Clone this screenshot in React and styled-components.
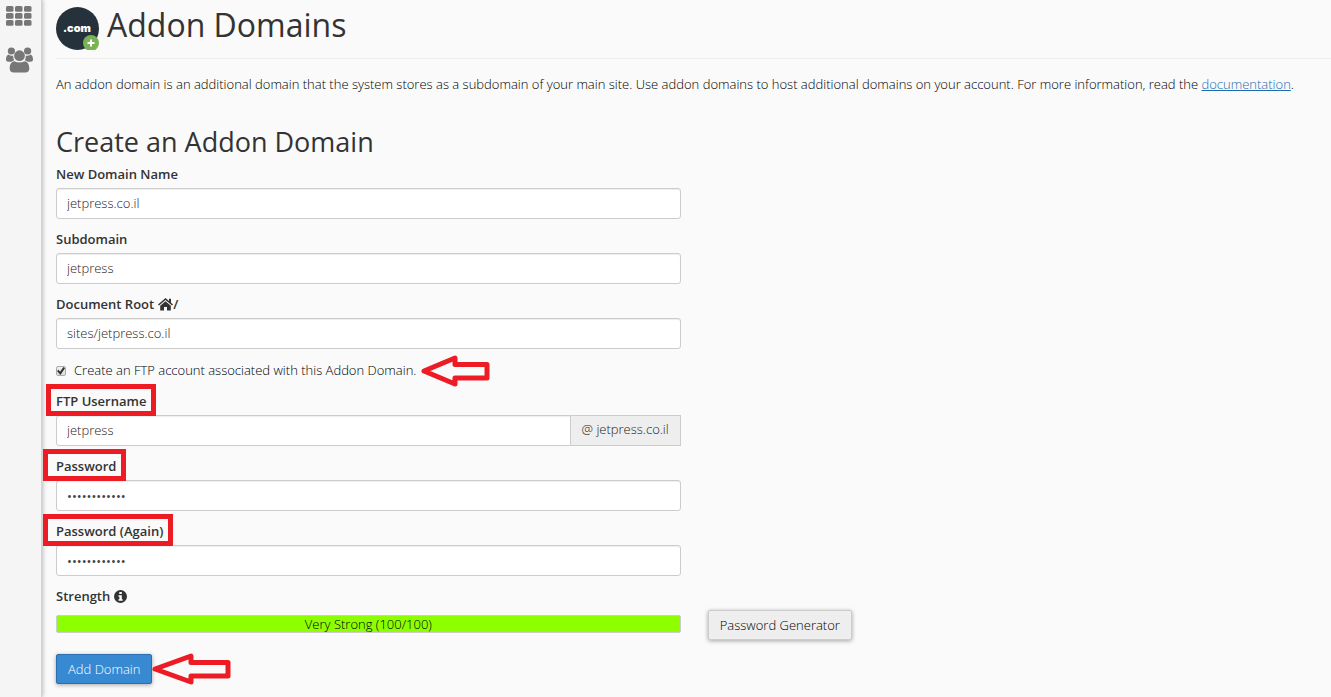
import React, { useState } from 'react'
import styled, { createGlobalStyle, css } from 'styled-components'

const RED = '#ed1c24'

const GlobalStyle = createGlobalStyle`
    *{
        box-sizing:border-box;
    }
    body{
        margin:0;
        background-color:#fafafa;
        color:#000;
        font-family:'Open Sans', 'Noto Sans', sans-serif;
        font-size:13px;
        font-weight:300;
        line-height:18px;
    }
`
const Page = styled.div`
    display:flex;
    min-height:100vh;
`
const Sidebar = styled.nav`
    display:flex;
    flex-direction:column;
    gap:21px;
    flex:0 0 42px;
    padding:6px 0 0 6px;
    background-color:#f5f5f5;
    border-right:1px solid #d4d4d4;
    box-shadow:1px 0 4px rgba(0,0,0,0.25);
`
const SideLink = styled.a`
    display:block;
    color:#777;
    svg{
        display:block;
    }
`
const Main = styled.main`
    flex:1;
    min-width:0;
    padding:0 0 12px 14px;
`
const Header = styled.header`
    display:flex;
    gap:8px;
    height:59px;
    padding-top:7px;
    border-bottom:1px solid #eee;
`
const Title = styled.h1`
    margin:0;
    color:#333;
    font-size:32px;
    font-weight:400;
    line-height:36px;
`
const Intro = styled.p`
    margin:16px 0 30px;
`
const DocLink = styled.a`
    color:#1d6cb0;
    text-decoration:underline;
`
const SubTitle = styled.h2`
    margin:0 0 4px;
    color:#333;
    font-size:27px;
    font-weight:400;
    line-height:38px;
`
const Row = styled.div`
    display:grid;
    grid-template-columns:49% 1fr;
    column-gap:27px;
    align-items:start;
`
const Field = styled.div`
    width:49%;
    margin-bottom:11px;
`
const labelStyle = css`
    position:relative;
    display:flex;
    align-items:center;
    width:fit-content;
    margin-bottom:5px;
    color:#333;
    font-weight:600;
    line-height:18px;
    svg{
        margin-left:4px;
    }
`
const Label = styled.label`
    ${labelStyle}
    ${props => props.$marked && css`
        &::after{
            content:'';
            position:absolute;
            inset:-8px -10px -6px -${props => props.$marked}px;
            border:5px solid ${RED};
            pointer-events:none;
        }
    `}
`
const StrengthLabel = styled.div`
    ${labelStyle}
`
const Input = styled.input`
    display:block;
    width:100%;
    height:31px;
    padding:4px 10px 6px;
    background-color:#fff;
    border:1px solid #ccc;
    border-radius:3px;
    box-shadow:inset 0 1px 1px rgba(0,0,0,0.07);
    color:#222;
    font:inherit;
    &[type='password']{
        padding:5px 10px;
        color:#444;
        font-weight:400;
    }
`
const Group = styled.div`
    display:flex;
    ${Input}{
        flex:1;
        min-width:0;
        border-radius:3px 0 0 3px;
    }
`
const Addon = styled.span`
    padding:4px 11px 6px;
    background-color:#eee;
    border:1px solid #ccc;
    border-left:0;
    color:#222;
`
const CheckRow = styled.div`
    display:flex;
    margin-bottom:12px;
    line-height:20px;
`
const CheckLabel = styled.label`
    display:flex;
    align-items:center;
    gap:8px;
`
const Check = styled.input`
    appearance:none;
    display:grid;
    place-items:center;
    width:10px;
    height:10px;
    margin:2px 0 0;
    background:linear-gradient(#f0f0f0,#ddd);
    border:1px solid #aaa;
    border-radius:2px;
    &:checked::before{
        content:'';
        width:8px;
        height:8px;
        background-color:#333;
        clip-path:polygon(0 50%, 20% 35%, 38% 60%, 80% 0, 100% 15%, 42% 100%);
    }
`
const Meter = styled.div`
    height:18px;
    margin-top:5px;
    border:1px solid #ccc;
    border-radius:2px;
    background-color:#fff;
`
const Fill = styled.div`
    height:16px;
    background-color:#8eff00;
    line-height:16px;
    text-align:center;
`
const Button = styled.button`
    height:30px;
    padding:0 11px 1px;
    border:1px solid ${props => props.$primary ? '#2a6fae' : '#ccc'};
    border-radius:2px;
    background-color:${props => props.$primary ? '#3789d1' : '#eee'};
    box-shadow:0 1px 4px rgba(0,0,0,0.35);
    color:${props => props.$primary ? '#fff' : '#000'};
    font:inherit;
    justify-self:start;
`
const Actions = styled.div`
    display:flex;
    margin-top:14px;
`
const Pointer = styled.span`
    position:relative;
    svg{
        position:absolute;
        top:${props => props.$top}px;
        left:${props => props.$left}px;
    }
`

const Arrow = ({ head, length }) => (
    <svg width={length + 3} height="33" viewBox={`0 0 ${length + 3} 33`} aria-hidden="true">
        <path
            d={`M4 17 L${head} 4 V10.5 H${length} V24 H${head} V30 Z`}
            fill="none" stroke={RED} strokeWidth="5" strokeLinejoin="round"
        />
    </svg>
)

const GridIcon = () => (
    <svg width="26" height="20" viewBox="0 0 26 20" fill="currentColor" aria-hidden="true">
        {[0, 7, 14].map(y => [0, 9, 18].map(x => (
            <rect key={`${x}-${y}`} x={x} y={y} width="7.5" height="5.8" rx="1.5" />
        )))}
    </svg>
)

const UsersIcon = () => (
    <svg width="28" height="26" viewBox="0 0 28 26" fill="currentColor" aria-hidden="true">
        <circle cx="5.4" cy="4" r="3.6" />
        <circle cx="21.6" cy="4" r="3.6" />
        <path d="M2.5 7.5C.8 8 0 10 0 12.5C0 14 1 14.7 2.5 14.7H5.5C6.5 14 7.5 13.5 8.2 13.3C7.5 12 7 10.5 7.2 8.6C5.5 9 4 8.7 2.5 7.5Z" />
        <path d="M24.5 7.5C26.2 8 27 10 27 12.5C27 14 26 14.7 24.5 14.7H21.5C20.5 14 19.5 13.5 18.8 13.3C19.5 12 20 10.5 19.8 8.6C21.5 9 23 8.7 24.5 7.5Z" />
        <circle cx="13.5" cy="8.7" r="5.4" />
        <path d="M8.5 14.2C5.2 14.7 3.7 17.5 3.7 21.5C3.7 24 5.2 25.5 7.7 25.5H19.3C21.8 25.5 23.3 24 23.3 21.5C23.3 17.5 21.8 14.7 18.500 14.2C16 15.8 11 15.8 8.500 14.2Z" />
    </svg>
)

const LogoText = styled.text`
    fill:#fff;
    font-family:Inter, 'Open Sans', sans-serif;
    font-size:11px;
    font-weight:900;
    text-anchor:middle;
`

const DomainLogo = () => (
    <svg width="43" height="43" viewBox="0 0 43 43" aria-hidden="true">
        <circle cx="21.5" cy="21.5" r="21.5" fill="#25323c" />
        <LogoText x="21" y="25">.com</LogoText>
        <circle cx="35" cy="36" r="8" fill="#7ab356" />
        <path d="M35 32.5V39.5M31.5 36H38.5" stroke="#fff" strokeWidth="2" />
    </svg>
)

const HomeIcon = () => (
    <svg width="15" height="13" viewBox="0 0 15 13" fill="currentColor" aria-hidden="true">
        <path d="M7.5 0L0 6.5L1 7.5L7.5 2L14 7.5L15 6.5L13 4.7V.8H11V3Z" />
        <path d="M7.5 3.2L2.2 7.7V12.5H6V9H9V12.5H12.8V7.7Z" />
    </svg>
)

const InfoIcon = () => (
    <svg width="13" height="13" viewBox="0 0 13 13" aria-hidden="true">
        <circle cx="6.5" cy="6.5" r="6.5" fill="#333" />
        <path d="M5.3 2H7.8V4H5.3ZM4.5 5.2H7.8V9.2H8.7V10.7H4.5V9.2H5.4V6.7H4.5Z" fill="#fff" />
    </svg>
)

const App = () => {
    const [form, setForm] = useState({
        domain: 'jetpress.co.il',
        subdomain: 'jetpress',
        root: 'sites/jetpress.co.il',
        ftp: true,
        username: 'jetpress',
        password: 'jetpress2018',
        again: 'jetpress2018',
    })
    const strength = 100

    const bind = name => ({
        id: name,
        value: form[name],
        onChange: e => setForm({ ...form, [name]: e.target.value }),
    })

    return (
        <Page>
            <GlobalStyle />
            <Sidebar>
                <SideLink href="#home" aria-label="Home"><GridIcon /></SideLink>
                <SideLink href="#users" aria-label="User Manager"><UsersIcon /></SideLink>
            </Sidebar>
            <Main>
                <Header>
                    <DomainLogo />
                    <Title>Addon Domains</Title>
                </Header>
                <Intro>
                    An addon domain is an additional domain that the system stores as a subdomain of your main site. Use addon domains to host additional domains on your account. For more information, read the <DocLink href="#documentation">documentation</DocLink>.
                </Intro>
                <form onSubmit={e => e.preventDefault()}>
                    <SubTitle>Create an Addon Domain</SubTitle>
                    <Field>
                        <Label htmlFor="domain">New Domain Name</Label>
                        <Input {...bind('domain')} />
                    </Field>
                    <Field>
                        <Label htmlFor="subdomain">Subdomain</Label>
                        <Input {...bind('subdomain')} />
                    </Field>
                    <Field>
                        <Label htmlFor="root">Document Root <HomeIcon />/</Label>
                        <Input {...bind('root')} />
                    </Field>
                    <CheckRow>
                        <CheckLabel>
                            <Check
                                type="checkbox"
                                checked={form.ftp}
                                onChange={e => setForm({ ...form, ftp: e.target.checked })}
                            />
                            Create an FTP account associated with this Addon Domain.
                        </CheckLabel>
                        <Pointer $top={-6} $left={4}><Arrow head={35} length={67} /></Pointer>
                    </CheckRow>
                    <Field>
                        <Label htmlFor="username" $marked={10}>FTP Username</Label>
                        <Group>
                            <Input {...bind('username')} />
                            <Addon>@ jetpress.co.il</Addon>
                        </Group>
                    </Field>
                    <Field>
                        <Label htmlFor="password" $marked={13}>Password</Label>
                        <Input type="password" {...bind('password')} />
                    </Field>
                    <Field>
                        <Label htmlFor="again" $marked={13}>Password (Again)</Label>
                        <Input type="password" {...bind('again')} />
                    </Field>
                    <StrengthLabel>Strength <InfoIcon /></StrengthLabel>
                    <Row>
                        <Meter>
                            <Fill style={{ width: `${strength}%` }}>Very Strong ({strength}/100)</Fill>
                        </Meter>
                        <Button type="button">Password Generator</Button>
                    </Row>
                    <Actions>
                        <Button type="submit" $primary>Add Domain</Button>
                        <Pointer $top={-2} $left={-1}><Arrow head={40} length={77} /></Pointer>
                    </Actions>
                </form>
            </Main>
        </Page>
    )
}

export default App
